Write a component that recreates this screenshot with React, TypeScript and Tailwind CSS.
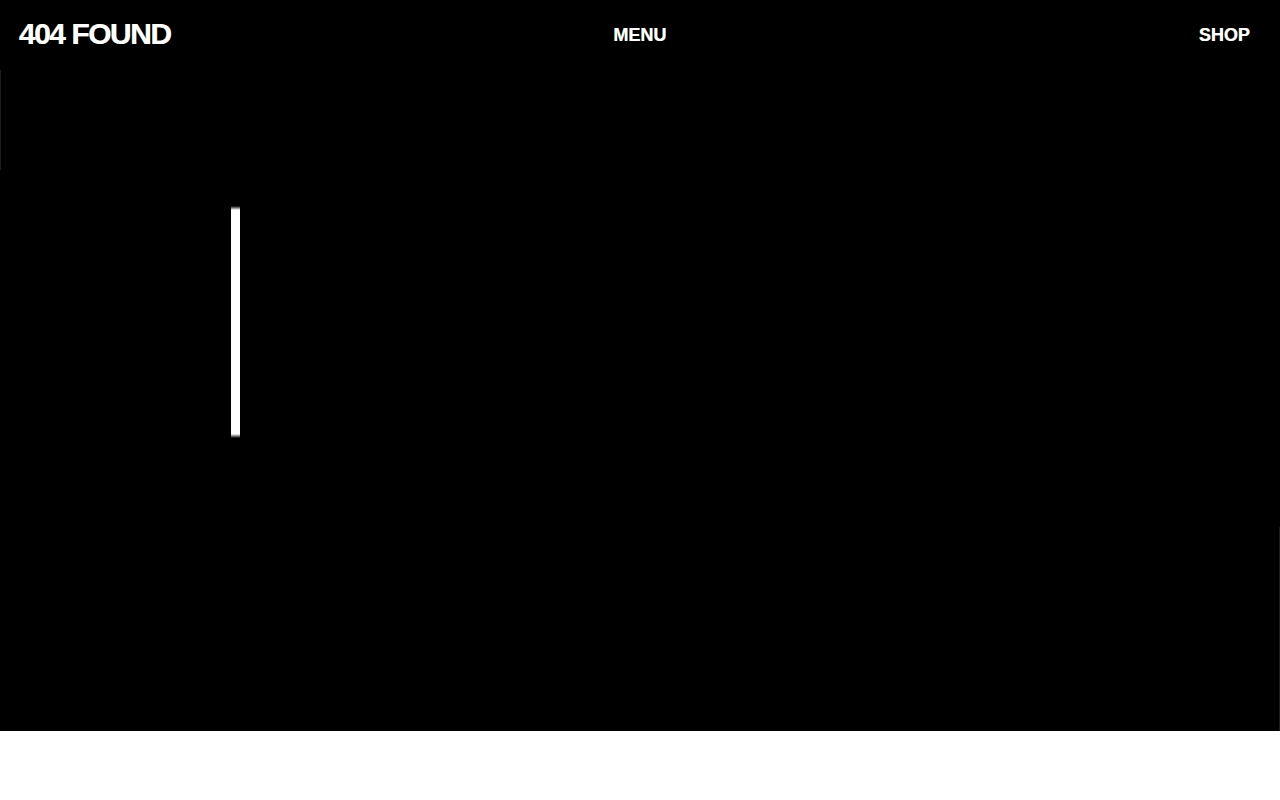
export default function App() {
  return (
    <div className="min-h-[800px] bg-white font-['Liberation_Sans',Arial,sans-serif]">
      {/* Hero */}
      <section className="relative h-[731px] bg-black text-white overflow-hidden">
        {/* faint edge lines */}
        <div className="absolute left-0 top-[70px] h-[100px] w-px bg-[#1c1c1c]" />
        <div className="absolute right-0 top-[527px] h-[204px] w-px bg-[#1c1c1c]" />

        <header className="grid h-[68px] grid-cols-[1fr_auto_1fr] items-center px-[19px]">
          <a className="justify-self-start text-[30px] font-bold leading-none tracking-[-0.05em] [text-shadow:-0.5px_0_rgba(255,200,0,0.6),0.5px_0_rgba(0,120,255,0.6)]">
            404 FOUND
          </a>
          <a className="justify-self-center pt-[2px] text-[18px] font-bold leading-none [text-shadow:-0.5px_0_rgba(255,200,0,0.6),0.5px_0_rgba(0,120,255,0.6)]">
            MENU
          </a>
          <a className="mr-[11px] justify-self-end pt-[2px] text-[18px] font-bold leading-none [text-shadow:-0.5px_0_rgba(255,200,0,0.6),0.5px_0_rgba(0,120,255,0.6)]">
            SHOP
          </a>
        </header>

        <div className="pl-[231px] pt-[138px]">
          <div className="h-[232px] w-[9px] blur-[0.4px] bg-[linear-gradient(to_bottom,#000_0,#fff_4px,#fff_calc(100%-4px),#000_100%)]" />
        </div>
      </section>
    </div>
  );
}
